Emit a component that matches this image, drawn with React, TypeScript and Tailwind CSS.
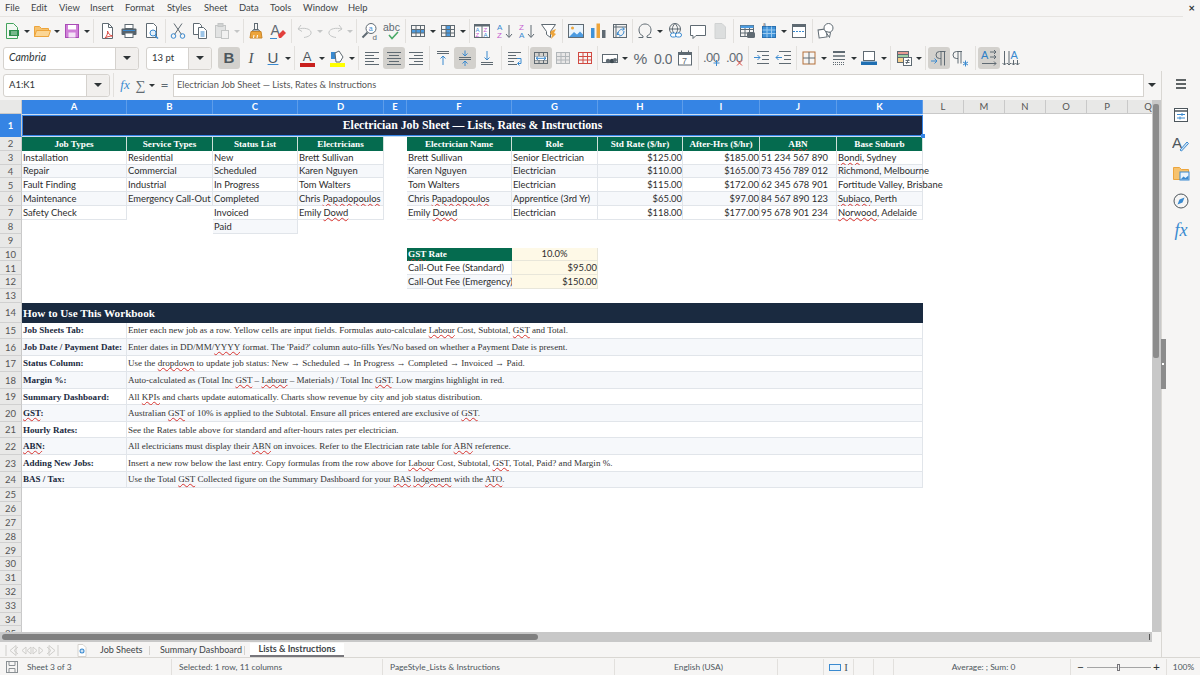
import type { ReactNode } from "react";

const BLUE = "#3a8ad0";
const GRAY = "#5f6a72";
const LITE = "#c4c6c6";
const ORANGE = "#eda53c";

function Ic({ children, size = 18 }: { children: ReactNode; size?: number }) {
  return (
    <svg width={size} height={size} viewBox="0 0 18 18" fill="none" strokeWidth="1">
      {children}
    </svg>
  );
}

function Lines({ ys, x1, x2, color = GRAY }: { ys: number[]; x1: number | number[]; x2: number | number[]; color?: string }) {
  return (
    <>
      {ys.map((y, i) => (
        <line
          key={y}
          x1={Array.isArray(x1) ? x1[i] : x1}
          x2={Array.isArray(x2) ? x2[i] : x2}
          y1={y}
          y2={y}
          stroke={color}
        />
      ))}
    </>
  );
}

// little table used by the row, column and merge buttons
function TableGlyph({ color = GRAY }: { color?: string }) {
  return (
    <g stroke={color}>
      <rect x="2.5" y="3.5" width="13" height="11" />
      <path d="M2.5 7.5h13M2.5 11h13M7 3.5v11M11.5 3.5v11" />
    </g>
  );
}

const icons: Record<string, ReactNode> = {
  newDoc: (
    <>
      <path d="M3.5 1.5h7l4 4v11h-11z" stroke="#43a35c" fill="#f2f8f2" />
      <rect x="6" y="8" width="10" height="6" fill="#2f8f4e" />
      <path d="M8 10h6M8 12h6" stroke="#bfe3c8" />
    </>
  ),
  open: (
    <>
      <path d="M1.5 4.5h5l2 2h7v8h-14z" fill="#f6c26e" stroke={ORANGE} />
      <path d="M1.5 14.5l2-6h14l-2 6z" fill="#fbd695" stroke={ORANGE} />
    </>
  ),
  save: (
    <>
      <rect x="2.5" y="2.5" width="13" height="13" fill="#d07fd8" stroke="#a94cb6" />
      <rect x="5" y="3" width="8" height="4.5" fill="#fff" />
      <rect x="5.5" y="10.5" width="7" height="5" fill="#f4e3f6" />
    </>
  ),
  pdf: (
    <>
      <path d="M4.5 1.5h6l4 4v11h-10z" stroke={GRAY} fill="#fff" />
      <path d="M10.5 1.5v4h4" stroke={GRAY} />
      <path d="M7 16c2-2 3-5 2.5-7 1 3 2.500 4.500 5 5-2 0-5 .5-7.500 2z" stroke="#d9463e" />
    </>
  ),
  print: (
    <>
      <rect x="5" y="2.500" width="8" height="4" fill="#fff" stroke={GRAY} />
      <rect x="1.500" y="6.500" width="15" height="6.500" rx="1" fill="#56626b" />
      <rect x="5" y="11" width="8" height="4.500" fill="#fff" stroke={GRAY} />
      <rect x="3" y="8" width="12" height="1" fill={BLUE} />
    </>
  ),
  preview: (
    <>
      <path d="M3.500 1.500h7l3 3v11h-10z" stroke={GRAY} fill="#fff" />
      <circle cx="10" cy="11" r="3" stroke={BLUE} fill="#e4f0fa" />
      <path d="M12 13.500l3 3" stroke={BLUE} strokeWidth="1.500" />
    </>
  ),
  cut: (
    <>
      <path d="M5 1.500l7.500 11M13 1.500l-7.500 11" stroke={GRAY} />
      <circle cx="4.500" cy="14" r="2.300" stroke={BLUE} />
      <circle cx="13.500" cy="14" r="2.300" stroke={BLUE} />
    </>
  ),
  copy: (
    <>
      <path d="M2.500 1.500h6l2 2v9h-8z" stroke={GRAY} fill="#fff" />
      <path d="M7.500 5.500h5l3 3v8h-8z" stroke={GRAY} fill="#fff" />
      <Lines ys={[10, 12, 14]} x1={9.500} x2={13.500} color={BLUE} />
    </>
  ),
  paste: (
    <>
      <rect x="2.500" y="3.500" width="10" height="12" fill="#e2e3e3" stroke={LITE} />
      <rect x="5" y="1.500" width="5" height="3" fill="#d0d2d2" stroke={LITE} />
      <rect x="8.500" y="8.500" width="7" height="8" fill="#f1f1f1" stroke={LITE} />
    </>
  ),
  clone: (
    <>
      <rect x="7.500" y="1.500" width="3" height="6" stroke={GRAY} />
      <path d="M5.500 9l1-1.500h5l1 1.500z" fill="#fff" stroke={GRAY} />
      <path d="M4 9.500h10l1 6.500H3z" fill={ORANGE} stroke="#c9862a" />
      <path d="M6.500 16l.5-3M10 16l.5-3" stroke="#fff" />
    </>
  ),
  clear: (
    <>
      <text x="1.500" y="13" fontFamily="'Liberation Sans',sans-serif" fontSize="14" fill={GRAY}>A</text>
      <path d="M1 16.500h7" stroke={BLUE} />
      <path d="M9 13l5-5 3 3-5 5h-2z" fill="#e2403c" />
    </>
  ),
  undo: <path d="M5 3L2 7l4 2.500M2.500 7C8 5.500 14 6.500 15 10c.8 3-3 5-7 5.500" stroke={LITE} />,
  redo: <path d="M13 3l3 4-4 2.500M15.500 7C10 5.500 4 6.500 3 10c-.8 3 3 5 7 5.500" stroke={LITE} />,
  find: (
    <>
      <circle cx="10" cy="6.500" r="5" stroke={GRAY} fill="#fff" />
      <path d="M6.500 10.500L1.500 15.500" stroke={GRAY} strokeWidth="2" />
      <text x="7.800" y="9" fontSize="7" fontFamily="'Liberation Sans',sans-serif" fill={BLUE}>a</text>
      <text x="11.500" y="17.500" fontSize="8" fontFamily="'Liberation Sans',sans-serif" fill={GRAY}>d</text>
    </>
  ),
  spell: (
    <>
      <text x="0" y="9" fontSize="10.500" fontFamily="'Liberation Sans',sans-serif" fill={GRAY}>abc</text>
      <path d="M6 13l3 3.500 6-6.500" stroke="#47a865" strokeWidth="1.500" />
    </>
  ),
  rows: (
    <>
      <rect x="2" y="7" width="14" height="4" fill="#4c9be0" />
      <TableGlyph color={GRAY} />
    </>
  ),
  cols: (
    <>
      <rect x="7" y="3.500" width="4.500" height="11" fill="#4c9be0" />
      <TableGlyph color={GRAY} />
    </>
  ),
  sortBox: (
    <>
      <rect x="1.500" y="2.500" width="15" height="13" fill="#fff" stroke={GRAY} />
      <rect x="1.500" y="2.500" width="15" height="2" fill={GRAY} />
      <path d="M9 2.500v13" stroke={GRAY} />
      <text x="2.500" y="10" fontSize="6" fontFamily="'Liberation Sans',sans-serif" fill={BLUE}>A</text>
      <text x="2.500" y="15" fontSize="6" fontFamily="'Liberation Sans',sans-serif" fill="#c55fd0">Z</text>
      <text x="10.500" y="10" fontSize="6" fontFamily="'Liberation Sans',sans-serif" fill="#c55fd0">Z</text>
      <text x="10.500" y="15" fontSize="6" fontFamily="'Liberation Sans',sans-serif" fill={BLUE}>A</text>
    </>
  ),
  sortAsc: (
    <>
      <text x="1" y="8" fontSize="8" fontFamily="'Liberation Sans',sans-serif" fill={BLUE}>A</text>
      <text x="1" y="16" fontSize="8" fontFamily="'Liberation Sans',sans-serif" fill="#c55fd0">Z</text>
      <path d="M13 3v12M10 12l3 3.500 3-3.500" stroke={GRAY} />
    </>
  ),
  sortDesc: (
    <>
      <text x="1" y="8" fontSize="8" fontFamily="'Liberation Sans',sans-serif" fill="#c55fd0">Z</text>
      <text x="1" y="16" fontSize="8" fontFamily="'Liberation Sans',sans-serif" fill={BLUE}>A</text>
      <path d="M13 3v12M10 12l3 3.500 3-3.500" stroke={GRAY} />
    </>
  ),
  filter: (
    <>
      <path d="M1.500 2.500h14l-5 7v6l-4-3v-3z" stroke={GRAY} fill="#fff" />
      <path d="M11 9l5-2-2 4 2 1-5 5 1-4-2-1z" fill={ORANGE} />
    </>
  ),
  image: (
    <>
      <rect x="1.500" y="2.500" width="15" height="13" stroke={GRAY} fill="#eaf4fc" />
      <circle cx="5.500" cy="6" r="1.500" fill={ORANGE} />
      <path d="M2 15l5-5 3 2.500 3-3 3 3V15z" fill="#4c9be0" />
    </>
  ),
  chart: (
    <>
      <rect x="2" y="6" width="3.500" height="10" fill="#3f92d8" />
      <rect x="7.500" y="1.500" width="3.500" height="14.500" fill={ORANGE} />
      <rect x="13" y="8" width="3.500" height="8" fill={GRAY} />
    </>
  ),
  pivot: (
    <>
      <rect x="2.500" y="2.500" width="13" height="13" stroke={GRAY} fill="#f2f2f2" />
      <path d="M2.500 5h13M5 2.500v13" stroke={GRAY} />
      <path d="M7 12c0-3 2-5 6-5M11.500 5.500L13.500 7l-2 1.500M7 10l-1 2.500h2.500M13 9c0 3-2 5-5 5" stroke={BLUE} />
    </>
  ),
  omega: (
    <path d="M2.500 15.500h4.500v-1.500c-2.500-1-4-3.200-4-6 0-3.500 2.500-6 6-6s6 2.500 6 6c0 2.800-1.500 5-4 6v1.500h4.500" stroke={GRAY} />
  ),
  link: (
    <>
      <circle cx="8" cy="7" r="5.500" stroke={GRAY} />
      <path d="M2.500 7h11M8 1.500c-3.500 3.500-3.500 7.500 0 11M8 1.500c3.500 3.500 3.500 7.500 0 11" stroke={GRAY} />
      <rect x="3.500" y="11" width="6" height="4" rx="2" stroke={BLUE} fill="#fff" />
      <rect x="8.500" y="11" width="6" height="4" rx="2" stroke={BLUE} fill="#fff" />
    </>
  ),
  comment: <path d="M1.500 3.500h15v10H7l-3 3v-3H1.500z" stroke={GRAY} fill="#fff" />,
  headerDoc: <path d="M4 1.500h7l3.500 3.500v11.500H4z" fill="#dcdede" stroke="#d0d2d2" />,
  freeze: (
    <>
      <TableGlyph color={GRAY} />
      <rect x="2.500" y="3.500" width="13" height="2.500" fill="#4c9be0" />
      <rect x="9" y="10" width="8" height="6" rx="1.500" fill={GRAY} />
    </>
  ),
  splitGrid: (
    <>
      <rect x="2.500" y="4.500" width="13" height="11" fill="#3f92d8" stroke="#2a70b0" />
      <path d="M2.500 8h13M2.500 11.500h13M7 4.500v11M11.500 4.500v11" stroke="#9ccbf0" />
      <text x="3" y="4" fontSize="5" fontFamily="'Liberation Sans',sans-serif" fill={GRAY}>a</text>
    </>
  ),
  headerRow: (
    <>
      <rect x="2.500" y="2.500" width="13" height="13" stroke={GRAY} fill="#fff" />
      <rect x="2.500" y="2.500" width="13" height="2.500" fill={GRAY} />
      <path d="M3 9.500h12" stroke={BLUE} strokeDasharray="2 1" />
    </>
  ),
  shapes: (
    <>
      <rect x="1.500" y="7.500" width="8" height="8" transform="rotate(-8 5 11)" stroke={GRAY} fill="#fff" />
      <circle cx="11.500" cy="6" r="4.500" stroke={GRAY} fill="#fff" />
      <path d="M8.500 9.500l5 1-1 5z" stroke={GRAY} fill="#fff" />
    </>
  ),
  alignL: <Lines ys={[3.500, 6.500, 9.500, 12.500, 15.500]} x1={2} x2={[16, 11, 16, 11, 16]} />,
  alignC: <Lines ys={[3.500, 6.500, 9.500, 12.500, 15.500]} x1={[2, 4, 2, 4, 2]} x2={[16, 14, 16, 14, 16]} />,
  alignR: <Lines ys={[3.500, 6.500, 9.500, 12.500, 15.500]} x1={[2, 7, 2, 7, 2]} x2={16} />,
  vTop: (
    <>
      <Lines ys={[2.500, 4.500]} x1={[3, 3]} x2={[15, 15]} />
      <path d="M9 16V7M6.500 9.500L9 7l2.500 2.500" stroke={BLUE} />
    </>
  ),
  vMid: (
    <>
      <Lines ys={[8.500, 10.500]} x1={[3, 3]} x2={[15, 15]} />
      <path d="M9 1.500V7M6.500 4.500L9 7l2.500-2.500M9 17v-5M6.500 14.500L9 12l2.500 2.500" stroke={BLUE} />
    </>
  ),
  vBot: (
    <>
      <Lines ys={[13.500, 15.500]} x1={[3, 3]} x2={[15, 15]} />
      <path d="M9 2v9M6.500 8.500L9 11l2.500-2.500" stroke={BLUE} />
    </>
  ),
  wrap: (
    <>
      <Lines ys={[3.500, 6.500, 9.500, 12.500, 15.500]} x1={2} x2={[15, 10, 12, 8, 11]} />
      <path d="M11 9.500h4v5h-3M13.500 12.500L11.500 14.500l2 2" stroke={BLUE} />
    </>
  ),
  merge: (
    <>
      <TableGlyph color={GRAY} />
      <rect x="3" y="7.500" width="12" height="3.500" fill="#fff" />
      <path d="M4 9.300h10M6 7.800L4 9.300l2 1.500M12 7.800l2 1.500-2 1.500" stroke={BLUE} />
    </>
  ),
  mergeOff: (
    <g opacity=".45">
      <rect x="2.500" y="3.500" width="13" height="11" fill="#d8d8d8" />
      <TableGlyph color={GRAY} />
    </g>
  ),
  unmerge: (
    <g>
      <rect x="2.500" y="3.500" width="13" height="11" stroke="#d14a42" />
      <path d="M2.500 7.500h13M2.500 11h13M7 3.500v11M11.500 3.500v11" stroke="#d14a42" />
    </g>
  ),
  currency: (
    <>
      <rect x="1.500" y="5.500" width="15" height="8" stroke={GRAY} fill="#fff" />
      <circle cx="7" cy="12" r="2.200" fill={GRAY} />
      <circle cx="11" cy="12" r="2.200" fill="#3e4a52" />
      <circle cx="14" cy="11" r="2" fill={GRAY} />
    </>
  ),
  percent: (
    <text x="1.500" y="15" fontSize="15.500" fontFamily="'Liberation Sans',sans-serif" fill={GRAY}>%</text>
  ),
  number: (
    <text x="0" y="14.500" fontSize="14" fontFamily="'Liberation Sans',sans-serif" fill={GRAY} letterSpacing="-.5">0.0</text>
  ),
  date: (
    <>
      <rect x="2.500" y="3.500" width="13" height="12.500" stroke={GRAY} fill="#fff" />
      <rect x="2.500" y="3.500" width="13" height="2.500" fill={GRAY} />
      <path d="M5.500 1.500v3M12.500 1.500v3" stroke={GRAY} />
      <text x="6" y="14.500" fontSize="9" fontFamily="'Liberation Sans',sans-serif" fill={GRAY}>7</text>
    </>
  ),
  decAdd: (
    <>
      <text x="0" y="13" fontSize="13" fontFamily="'Liberation Sans',sans-serif" fill={GRAY} letterSpacing="-.5">.00</text>
      <path d="M13.500 11v6M10.500 14h6" stroke={BLUE} />
    </>
  ),
  decDel: (
    <>
      <text x="0" y="13" fontSize="13" fontFamily="'Liberation Sans',sans-serif" fill={GRAY} letterSpacing="-.5">.00</text>
      <path d="M11 11.500l5 5M16 11.500l-5 5" stroke="#d9463e" />
    </>
  ),
  indentIn: (
    <>
      <Lines ys={[2.500, 6.500, 10.500, 14.500]} x1={[4, 9, 9, 4]} x2={16} />
      <path d="M1 8.500h6M4.500 6L7 8.500 4.500 11" stroke={BLUE} />
    </>
  ),
  indentOut: (
    <>
      <Lines ys={[2.500, 6.500, 10.500, 14.500]} x1={[4, 9, 9, 4]} x2={16} />
      <path d="M7 8.500H1M3.500 6L1 8.500 3.500 11" stroke={BLUE} />
    </>
  ),
  borders: (
    <>
      <rect x="3" y="3" width="12" height="12" stroke="#b3703a" />
      <path d="M9 3v12M3 9h12" stroke={GRAY} />
    </>
  ),
  borderStyle: (
    <>
      <rect x="3" y="2" width="12" height="2" fill={GRAY} />
      <path d="M3 7h12" stroke={GRAY} strokeWidth="1.500" />
      <path d="M3 10.500h12" stroke={GRAY} />
      <path d="M3 13.500h12M3 15.500h12" stroke={GRAY} strokeDasharray="1 1" />
    </>
  ),
  borderColor: (
    <>
      <rect x="3.500" y="2.500" width="11" height="9" stroke={GRAY} fill="#fff" />
      <rect x="1" y="12.500" width="16" height="3.500" fill="#1f6fb2" />
    </>
  ),
  cond: (
    <>
      <rect x="2.500" y="2.500" width="11" height="3" fill="#e69a92" stroke={GRAY} />
      <rect x="2.500" y="5.500" width="11" height="3" fill="#9bd0a5" stroke={GRAY} />
      <rect x="2.500" y="8.500" width="6" height="5" fill="#f5d08e" stroke={GRAY} />
      <rect x="8.500" y="8.500" width="8" height="8" fill="#fff" stroke={GRAY} />
      <path d="M10.500 11.500h4M10.500 13.500h4M13.500 10l-2 5" stroke={GRAY} />
    </>
  ),
  ltr: (
    <>
      <path d="M14.500 2.500v14M11 2.500v14M15.500 2.500H9.500a3.500 3.500 0 0 0 0 7H11" stroke={GRAY} />
      <path d="M1 12h6M4.500 9.500L7 12l-2.500 2.500" stroke={BLUE} />
    </>
  ),
  rtl: (
    <>
      <path d="M9 2.500v12M6 2.500v12M10 2.500H4.500a3.500 3.500 0 0 0 0 7H6" stroke={GRAY} />
      <path d="M11 13l5 3M16 13l-5 3M13.500 11.500v6" stroke={BLUE} />
    </>
  ),
  textH: (
    <>
      <text x="1" y="10" fontSize="11" fontFamily="'Liberation Sans',sans-serif" fill="#2f7fc7">A</text>
      <path d="M10 3h6M14 1l2 2-2 2M10 8h6M14 6l2 2-2 2M2 14.500h14M14 12.500l2 2-2 2" stroke={GRAY} />
    </>
  ),
  textV: (
    <>
      <text x="8.500" y="10" fontSize="11" fontFamily="'Liberation Sans',sans-serif" fill={BLUE}>A</text>
      <path d="M2.500 2v14M.5 14l2 2 2-2M7 2v14M5 14l2 2 2-2M11.500 11v5M9.500 14l2 2 2-2M15.500 11v5M13.500 14l2 2 2-2" stroke={GRAY} />
    </>
  ),
};

function Tool({ name, on }: { name: string; on?: boolean }) {
  return (
    <div className={`w-[22px] h-[22px] shrink-0 flex items-center justify-center rounded-[3px] ${on ? "bg-[#d3d1cd]" : ""}`}>
      <Ic>{icons[name]}</Ic>
    </div>
  );
}

function Arrow({ off }: { off?: boolean }) {
  return (
    <div className="w-[8px] h-[22px] shrink-0 flex items-center justify-center">
      <div className={`w-0 h-0 border-x-[3px] border-x-transparent border-t-[3px] ${off ? "border-t-[#c4c6c6]" : "border-t-[#2e3436]"}`} />
    </div>
  );
}

function Sep({ w }: { w: string }) {
  return (
    <div className={`${w} h-[24px] shrink-0 flex justify-center`}>
      <div className="w-px h-full bg-[#e2e0dd]" />
    </div>
  );
}

function LetterBtn({ children, className, on }: { children: ReactNode; className?: string; on?: boolean }) {
  return (
    <div className={`w-[22px] h-[22px] shrink-0 flex items-center justify-center rounded-[3px] text-[15px] text-[#4d565c] ${on ? "bg-[#d3d1cd]" : ""} ${className ?? ""}`}>
      {children}
    </div>
  );
}

function Combo({ text, box, drop, italic }: { text: string; box: string; drop: string; italic?: boolean }) {
  return (
    <div className={`${box} h-[23px] shrink-0 flex bg-white border border-[#d5d2ce] rounded-[3px] text-[#2e3436]`}>
      <div className={`flex-1 flex items-center pl-[5px] ${italic ? "italic text-[10.5px]" : "text-[9.5px]"}`}>{text}</div>
      <div className={`${drop} flex items-center justify-center bg-[#f1efed] border-l border-[#d5d2ce] rounded-r-[3px]`}>
        <div className="w-0 h-0 border-x-[4px] border-x-transparent border-t-[4px] border-t-[#2e3436]" />
      </div>
    </div>
  );
}

const MENUS = [
  ["File", "w-[26px]"],
  ["Edit", "w-[28px]"],
  ["View", "w-[31px]"],
  ["Insert", "w-[35px]"],
  ["Format", "w-[42px]"],
  ["Styles", "w-[37px]"],
  ["Sheet", "w-[35px]"],
  ["Data", "w-[31px]"],
  ["Tools", "w-[33px]"],
  ["Window", "w-[45px]"],
  ["Help", "w-[30px]"],
];

function MenuBar() {
  return (
    <div className="h-[17px] flex items-center pl-[5px] pr-[6px] pt-px text-[9.4px] text-[#3d4447] border-b border-[#e6e4e1] mr-[17px] relative">
      {MENUS.map(([label, w]) => (
        <div key={label} className={`${w} shrink-0`}>{label}</div>
      ))}
      <span className="absolute right-[-12px] top-[2px] text-[11px] leading-none text-[#2e3436] font-bold">×</span>
    </div>
  );
}

function ToolbarTop() {
  return (
    <div className="h-[28px] flex items-center pl-[1px]">
      <Tool name="newDoc" /><Arrow />
      <Tool name="open" /><Arrow />
      <Tool name="save" /><Arrow />
      <Sep w="w-[5px]" />
      <Tool name="pdf" /><Tool name="print" /><div className="w-px" /><Tool name="preview" />
      <Sep w="w-[4px]" />
      <Tool name="cut" /><Tool name="copy" /><Tool name="paste" /><Arrow off />
      <Sep w="w-[4px]" />
      <Tool name="clone" /><Tool name="clear" />
      <Sep w="w-[5px]" />
      <Tool name="undo" /><Arrow off /><Tool name="redo" /><Arrow off />
      <Sep w="w-[5px]" />
      <Tool name="find" /><Tool name="spell" />
      <Sep w="w-[4px]" />
      <Tool name="rows" /><Arrow /><Tool name="cols" /><Arrow />
      <Sep w="w-[4px]" />
      <Tool name="sortBox" /><div className="w-px" /><Tool name="sortAsc" /><Tool name="sortDesc" /><Tool name="filter" />
      <Sep w="w-[5px]" />
      <Tool name="image" /><Tool name="chart" /><Tool name="pivot" />
      <Sep w="w-[3px]" />
      <Tool name="omega" /><Arrow /><div className="w-px" /><Tool name="link" /><Tool name="comment" /><Tool name="headerDoc" />
      <Sep w="w-[5px]" />
      <Tool name="freeze" /><Tool name="splitGrid" /><Arrow /><Tool name="headerRow" />
      <Sep w="w-[5px]" />
      <Tool name="shapes" />
    </div>
  );
}

function ToolbarFormat() {
  return (
    <div className="h-[26px] flex items-center pl-[3px]">
      <Combo text="Cambria" box="w-[136px]" drop="w-[23px]" italic />
      <div className="w-[7px]" />
      <Combo text="13 pt" box="w-[66px]" drop="w-[23px]" />
      <div className="w-[6px]" />
      <LetterBtn on className="font-['Liberation_Sans',sans-serif] font-bold">B</LetterBtn>
      <LetterBtn className="font-['Liberation_Serif',serif] italic">I</LetterBtn>
      <LetterBtn className="font-['Liberation_Sans',sans-serif] underline decoration-[#3a8ad0]">U</LetterBtn>
      <Arrow />
      <Sep w="w-[4px]" />
      <div className="w-[22px] h-[22px] shrink-0 flex flex-col items-center justify-center">
        <span className="text-[13px] leading-[13px] text-[#4d565c] font-['Liberation_Sans',sans-serif]">A</span>
        <div className="w-[15px] h-[4px] bg-[#c9211e]" />
      </div>
      <Arrow />
      <div className="w-[22px] h-[22px] shrink-0 flex flex-col items-center justify-center">
        <svg width="14" height="13" viewBox="0 0 14 13" fill="none">
          <path d="M1 2h6v7H1z" fill="#3a8ad0" />
          <path d="M5 3l4-2 4 6-3 5H6z" fill="#fff" stroke="#5f6a72" />
        </svg>
        <div className="w-[15px] h-[4px] bg-[#ffff00]" />
      </div>
      <Arrow />
      <Sep w="w-[5px]" />
      <Tool name="alignL" /><Tool name="alignC" on /><Tool name="alignR" />
      <Sep w="w-[5px]" />
      <Tool name="vTop" /><Tool name="vMid" on /><Tool name="vBot" />
      <Sep w="w-[6px]" />
      <Tool name="wrap" />
      <Sep w="w-[4px]" />
      <Tool name="merge" on /><Tool name="mergeOff" /><Tool name="unmerge" />
      <Sep w="w-[3px]" />
      <Tool name="currency" /><Arrow /><div className="w-px" />
      <Tool name="percent" /><Tool name="number" /><Tool name="date" />
      <Sep w="w-[5px]" />
      <Tool name="decAdd" /><div className="w-px" /><Tool name="decDel" />
      <Sep w="w-[5px]" />
      <Tool name="indentIn" /><Tool name="indentOut" />
      <Sep w="w-[3px]" />
      <Tool name="borders" /><Arrow /><Tool name="borderStyle" /><Arrow /><Tool name="borderColor" /><Arrow />
      <Sep w="w-[5px]" />
      <Tool name="cond" /><Arrow />
      <Sep w="w-[5px]" />
      <Tool name="ltr" on /><Tool name="rtl" />
      <Sep w="w-[6px]" />
      <Tool name="textH" on /><Tool name="textV" />
    </div>
  );
}

function FormulaBar() {
  return (
    <div className="h-[28px] flex items-center pl-[3px] pr-[2px] text-[#2e3436]">
      <Combo text="A1:K1" box="w-[107px]" drop="w-[23px]" />
      <Sep w="w-[7px]" />
      <div className="w-[16px] text-center text-[13px] italic text-[#3a8ad0] font-['Liberation_Serif',serif]">fx</div>
      <div className="w-[15px] text-center text-[14px] text-[#5f6a72] font-['Liberation_Serif',serif]">∑</div>
      <Arrow />
      <div className="w-[17px] text-center text-[14px] leading-none text-[#5f6a72]">=</div>
      <div className="flex-1 h-[23px] flex items-center pl-[3px] bg-white border border-[#d5d2ce] text-[9.2px] text-[#555]">
        Electrician Job Sheet — Lists, Rates &amp; Instructions
      </div>
      <div className="w-[15px] flex justify-center">
        <div className="w-0 h-0 border-x-[4px] border-x-transparent border-t-[4px] border-t-[#2e3436]" />
      </div>
    </div>
  );
}

const GRID = "grid grid-cols-[22px_105px_86px_85px_86px_23px_105px_86px_85px_77px_77px_86px_41px_41px_41px_41px_41px_41px]";

function S({ children }: { children: ReactNode }) {
  return <span className="underline decoration-wavy decoration-[#d8342f] decoration-[0.7px] underline-offset-[0.5px]">{children}</span>;
}

function Row({ n, h, sel, children }: { n: number; h: string; sel?: boolean; children?: ReactNode }) {
  return (
    <div className={`${GRID} ${h}`}>
      <div className={`flex items-center justify-center pt-px border-b text-[9.5px] ${sel ? "bg-[#3584e4] text-white font-bold border-[#3584e4]" : "bg-[#e8e8e7] text-[#555] border-[#d0d0d0]"} border-r border-r-[#c9c9c9]`}>
        {n}
      </div>
      {children}
    </div>
  );
}

function Head({ children, span }: { children: ReactNode; span?: string }) {
  return (
    <div className={`${span ?? ""} bg-[#056b4f] text-white font-bold text-[9.2px] pt-px flex items-center justify-center border-r border-[#cfe0d9] whitespace-nowrap font-['Liberation_Serif',serif]`}>
      <span>{children}</span>
    </div>
  );
}

function Cell({ children, alt, right }: { children?: ReactNode; alt?: boolean; right?: boolean }) {
  return (
    <div className={`flex items-center whitespace-nowrap border-b border-r border-[#e1e5ea] text-[9.4px] text-[#2d2d2d] ${alt ? "bg-[#f6f8fb]" : "bg-white"} ${right ? "justify-end" : "pl-px"}`}>
      <span>{children}</span>
    </div>
  );
}

const LISTS: ReactNode[][] = [
  ["Installation", "Residential", "New", "Brett Sullivan", "Brett Sullivan", "Senior Electrician", "$125.00", "$185.00", "51 234 567 890", <><S>Bondi</S>, Sydney</>],
  ["Repair", "Commercial", "Scheduled", "Karen Nguyen", "Karen Nguyen", "Electrician", "$110.00", "$165.00", "73 456 789 012", "Richmond, Melbourne"],
  ["Fault Finding", "Industrial", "In Progress", "Tom Walters", "Tom Walters", "Electrician", "$115.00", "$172.00", "62 345 678 901", "Fortitude Valley, Brisbane"],
  ["Maintenance", "Emergency Call-Out", "Completed", <>Chris <S>Papadopoulos</S></>, <>Chris <S>Papadopoulos</S></>, "Apprentice (3rd Yr)", "$65.00", "$97.00", "84 567 890 123", <><S>Subiaco</S>, Perth</>],
  ["Safety Check", null, "Invoiced", <>Emily <S>Dowd</S></>, <>Emily <S>Dowd</S></>, "Electrician", "$118.00", "$177.00", "95 678 901 234", <><S>Norwood</S>, Adelaide</>],
];

const HOWTO: [ReactNode, ReactNode][] = [
  ["Job Sheets Tab:", <>Enter each new job as a row. Yellow cells are input fields. Formulas auto-calculate <S>Labour</S> Cost, Subtotal, <S>GST</S> and Total.</>],
  ["Job Date / Payment Date:", <>Enter dates in DD/MM/<S>YYYY</S> format. The 'Paid?' column auto-fills Yes/No based on whether a Payment Date is present.</>],
  ["Status Column:", <>Use the <S>dropdown</S> to update job status: New → Scheduled → In Progress → Completed → Invoiced → Paid.</>],
  ["Margin %:", <>Auto-calculated as (Total Inc <S>GST</S> – <S>Labour</S> – Materials) / Total Inc <S>GST</S>. Low margins highlight in red.</>],
  ["Summary Dashboard:", <>All <S>KPIs</S> and charts update automatically. Charts show revenue by city and job status distribution.</>],
  [<><S>GST</S>:</>, <>Australian <S>GST</S> of 10% is applied to the Subtotal. Ensure all prices entered are exclusive of <S>GST</S>.</>],
  ["Hourly Rates:", "See the Rates table above for standard and after-hours rates per electrician."],
  [<><S>ABN</S>:</>, <>All electricians must display their <S>ABN</S> on invoices. Refer to the Electrician rate table for <S>ABN</S> reference.</>],
  ["Adding New Jobs:", <>Insert a new row below the last entry. Copy formulas from the row above for <S>Labour</S> Cost, Subtotal, <S>GST</S>, Total, Paid? and Margin %.</>],
  ["BAS / Tax:", <>Use the Total <S>GST</S> Collected figure on the Summary Dashboard for your <S>BAS</S> <S>lodgement</S> with the <S>ATO</S>.</>],
];

const COL_LABELS = ["A", "B", "C", "D", "E", "F", "G", "H", "I", "J", "K", "L", "M", "N", "O", "P", "Q"];

function Sheet() {
  return (
    <div className="flex-1 min-w-0 overflow-hidden bg-white font-['Lato',sans-serif] leading-none">
      <div className="w-[1169px]">
        <div className={`${GRID} h-[14px] text-[9.5px]`}>
          <div className="bg-[#e8e8e7] border-r border-b border-[#c9c9c9]" />
          {COL_LABELS.map((c, i) => (
            <div
              key={c}
              className={`flex items-center justify-center border-r ${i < 11 ? "bg-[#3584e4] border-[#5d9dea] text-white font-bold" : "bg-[#e8e8e7] border-[#c9c9c9] border-b text-[#555]"}`}
            >
              {c}
            </div>
          ))}
        </div>

        <Row n={1} h="h-[23px]" sel>
          <div className="col-span-11 relative bg-[#1a2540] border-y border-y-[#c9ddf5] pt-px flex items-center justify-center text-white font-bold text-[11.8px] font-['Liberation_Serif',serif]">
            Electrician Job Sheet — Lists, Rates &amp; Instructions
            <div className="absolute inset-0 border border-[#3584e4]" />
            <div className="absolute right-[-2px] bottom-[-2px] w-[4px] h-[4px] bg-[#3584e4]" />
          </div>
        </Row>

        <Row n={2} h="h-[13.83px]">
          <Head>Job Types</Head>
          <Head>Service Types</Head>
          <Head>Status List</Head>
          <Head>Electricians</Head>
          <div />
          <Head>Electrician Name</Head>
          <Head>Role</Head>
          <Head>Std Rate ($/hr)</Head>
          <Head>After-Hrs ($/hr)</Head>
          <Head><S>ABN</S></Head>
          <Head>Base Suburb</Head>
        </Row>

        {LISTS.map((r, i) => (
          <Row key={i} n={i + 3} h="h-[13.83px]">
            <Cell alt={i % 2 === 1}>{r[0]}</Cell>
            {r[1] ? <Cell alt={i % 2 === 1}>{r[1]}</Cell> : <div />}
            <Cell alt={i % 2 === 1}>{r[2]}</Cell>
            <Cell alt={i % 2 === 1}>{r[3]}</Cell>
            <div />
            <Cell alt={i % 2 === 1}>{r[4]}</Cell>
            <Cell alt={i % 2 === 1}>{r[5]}</Cell>
            <Cell alt={i % 2 === 1} right>{r[6]}</Cell>
            <Cell alt={i % 2 === 1} right>{r[7]}</Cell>
            <Cell alt={i % 2 === 1}>{r[8]}</Cell>
            <Cell alt={i % 2 === 1}>{r[9]}</Cell>
          </Row>
        ))}

        <Row n={8} h="h-[13.83px]">
          <div />
          <div />
          <Cell alt>Paid</Cell>
        </Row>
        <Row n={9} h="h-[13.83px]" />
        <Row n={10} h="h-[13.83px]">
          <div className="col-start-7 bg-[#056b4f] text-white font-bold text-[9.2px] pt-px flex items-center px-px font-['Liberation_Serif',serif]">
            <span><S>GST</S> Rate</span>
          </div>
          <div className="bg-[#fef9e7] border-b border-r border-[#e8e6da] flex items-center justify-center text-[9.4px] text-[#2d2d2d]">10.0%</div>
        </Row>
        <Row n={11} h="h-[13.83px]">
          <div className="col-start-7 grid"><Cell>Call-Out Fee (Standard)</Cell></div>
          <div className="bg-[#fef9e7] border-b border-r border-[#e8e6da] flex items-center justify-end text-[9.4px] text-[#2d2d2d]">$95.00</div>
        </Row>
        <Row n={12} h="h-[13.83px]">
          <div className="col-start-7 grid"><Cell alt>Call-Out Fee (Emergency)</Cell></div>
          <div className="bg-[#fef9e7] border-b border-r border-[#e8e6da] flex items-center justify-end text-[9.4px] text-[#2d2d2d]">$150.00</div>
        </Row>
        <Row n={13} h="h-[13.83px]" />

        <Row n={14} h="h-[19.7px]">
          <div className="col-span-11 bg-[#1a2a40] flex items-center pl-px pt-px text-white font-bold text-[11.2px] font-['Liberation_Serif',serif]">
            How to Use This Workbook
          </div>
        </Row>

        {HOWTO.map(([k, v], i) => (
          <Row key={i} n={i + 15} h="h-[16.55px]">
            <div className={`flex items-center pl-px pt-px border-b border-r border-[#e1e5ea] whitespace-nowrap font-bold text-[9.05px] text-[#1a2a40] font-['Liberation_Serif',serif] ${i % 2 ? "bg-[#f6f8fb]" : "bg-white"}`}>
              <span>{k}</span>
            </div>
            <div className={`col-span-10 flex items-center pl-px pt-px border-b border-r border-[#e1e5ea] whitespace-pre font-['Liberation_Serif',serif] text-[9.05px] text-[#333] ${i % 2 ? "bg-[#f6f8fb]" : "bg-white"}`}>
              <span>{v}</span>
            </div>
          </Row>
        ))}

        {Array.from({ length: 11 }, (_, i) => (
          <Row key={i} n={i + 25} h="h-[13.83px]" />
        ))}
      </div>
    </div>
  );
}

function VScroll() {
  return (
    <div className="w-[9px] shrink-0 bg-[#c8c8c8] pt-[4px] pl-px">
      <div className="w-[6px] h-[254px] bg-[#8c8c8c] rounded-[2px]" />
    </div>
  );
}

function HScroll() {
  return (
    <div className="h-[10px] flex bg-[#f6f5f4]">
      <div className="flex-1 bg-[#c8c8c8] pl-[2px] pt-[2px] pr-[2px] flex justify-between">
        <div className="w-[536px] h-[6px] bg-[#7f7f7f] rounded-[3px]" />
        <div className="w-px h-[6px] bg-[#555]" />
      </div>
      <div className="w-[9px]" />
    </div>
  );
}

function NavGlyph() {
  return (
    <svg width="62" height="13" viewBox="0 0 62 13" fill="none" stroke="#cfcecb">
      <path d="M1 1v11M11 1.500L5 6.500l6 5zM13 3l-4 3.500 4 3.500" />
      <path d="M21 3l-4 3.500 4 3.500zM26 3l-4 3.500 4 3.500zM28 3l4 3.500-4 3.500zM34 3l4 3.500-4 3.500z" />
      <path d="M44 1.500l6 5-6 5zM42 3l4 3.500-4 3.500M53 1v11" />
    </svg>
  );
}

function TabSep() {
  return <div className="w-[11px] h-[9px] shrink-0 flex justify-center"><div className="w-px bg-[#d5d2ce]" /></div>;
}

function Tabs() {
  return (
    <div className="h-[15px] flex items-center text-[9px] text-[#3d4447] pl-[5px] pt-px">
      <NavGlyph />
      <div className="w-[10px]" />
      <svg width="10" height="13" viewBox="0 0 10 13" fill="none">
        <path d="M1 .5h5l3 3v9H1z" fill="#fff" stroke="#d5d2ce" />
        <circle cx="5" cy="7" r="2.500" fill="#3a8ad0" />
        <path d="M3.500 7h3M5 5.500v3" stroke="#fff" />
      </svg>
      <div className="w-[13px]" />
      <div className="w-[44px] whitespace-nowrap">Job Sheets</div>
      <TabSep />
      <div className="w-[84px] pl-[5px] whitespace-nowrap">Summary Dashboard</div>
      <TabSep />
      <div className="w-[94px] h-full flex items-center justify-center bg-white border-b-2 border-[#77767b] font-bold whitespace-nowrap">
        Lists &amp; Instructions
      </div>
    </div>
  );
}

function StatusSep({ w, children, center }: { w: string; children?: ReactNode; center?: boolean }) {
  return (
    <div className={`${w} h-full shrink-0 flex items-center border-r border-[#e2e0dd] whitespace-nowrap ${center ? "justify-center" : "pl-[7px]"}`}>
      {children}
    </div>
  );
}

function StatusBar() {
  return (
    <div className="h-[18px] flex items-center border-t border-[#d9d7d3] pt-px text-[8.4px] text-[#4d565c]">
      <div className="w-[172px] h-full shrink-0 flex items-center border-r border-[#e2e0dd] pl-[6px] gap-[4px]">
        <svg width="12" height="12" viewBox="0 0 12 12" fill="none" stroke="#8a9094">
          <rect x=".5" y=".5" width="11" height="11" />
          <path d="M3 .5v4h6v-4M3 11.500v-4h6v4" />
        </svg>
        <span className="ml-[5px]">Sheet 3 of 3</span>
      </div>
      <StatusSep w="w-[211px]">Selected: 1 row, 11 columns</StatusSep>
      <StatusSep w="w-[232px]">PageStyle_Lists &amp; Instructions</StatusSep>
      <StatusSep w="w-[163px]" center><span className="ml-[5px]">English (USA)</span></StatusSep>
      <StatusSep w="w-[46px]" />
      <StatusSep w="w-[30px]" center>
        <div className="flex items-center gap-[3px]">
          <div className="w-[12px] h-[7px] border border-[#3a8ad0] bg-[#eaf4fc]" />
          <span className="text-[11px] leading-none font-['Liberation_Serif',serif]">I</span>
        </div>
      </StatusSep>
      <StatusSep w="w-[20px]" />
      <StatusSep w="w-[20px]" />
      <StatusSep w="w-[177px]" center><span className="ml-[3px]">Average: ; Sum: 0</span></StatusSep>
      <div className="w-[96px] h-full shrink-0 flex items-center justify-between px-[6px] border-r border-[#e2e0dd] text-[#2e3436]">
        <span className="text-[12px] leading-none">−</span>
        <div className="relative w-[64px] h-px bg-[#a5a5a5]">
          <div className="absolute left-[30px] top-[-3px] w-[3px] h-[7px] border border-[#77767b] bg-[#f6f5f4]" />
        </div>
        <span className="text-[12px] leading-none">+</span>
      </div>
      <div className="flex-1 text-center">100%</div>
    </div>
  );
}

function Sidebar() {
  return (
    <div className="relative w-[39px] shrink-0 flex flex-col items-center border-l border-[#d9d7d3] pt-[4px]">
      <div className="absolute left-[-1px] top-[268px] w-[5px] h-[50px] bg-[#8c8c8c]">
        <div className="absolute left-px top-[24px] w-[2px] h-[2px] bg-white" />
      </div>
      <div className="h-[18px] flex items-center">
        <svg width="14" height="10" viewBox="0 0 14 10" stroke="#2e3436" strokeWidth="1.500"><path d="M2 1h10M2 5h10M2 9h10" /></svg>
      </div>
      <div className="h-[13px]" />
      <Ic>
        <rect x="2.500" y="2.500" width="13" height="13" stroke="#4d565c" fill="#fff" />
        <path d="M2.500 5h13" stroke="#4d565c" strokeWidth="1.500" />
        <path d="M5 8.500h8M5 12h8M10 7v3M8 10.500v3" stroke="#3a8ad0" />
      </Ic>
      <div className="h-[11px]" />
      <Ic>
        <text x="0" y="13" fontSize="15" fontFamily="'Liberation Sans',sans-serif" fill="#4d565c">A</text>
        <path d="M8 15l7-8 1.500 1.500-7 7.500z" stroke="#3a8ad0" fill="#cfe4f6" />
      </Ic>
      <div className="h-[11px]" />
      <Ic>
        <path d="M1.500 3.500h6l2 2h7v10h-15z" fill="#f6c26e" stroke="#eda53c" />
        <rect x="8" y="8" width="9" height="8" fill="#eaf4fc" stroke="#3a8ad0" />
        <path d="M8.500 15.500l3-3 2 1.500 3-2.500v4z" fill="#3a8ad0" />
      </Ic>
      <div className="h-[10px]" />
      <Ic>
        <circle cx="9" cy="9" r="7" stroke="#4d565c" />
        <path d="M12.500 5.500l-2 5-5 2 2-5z" fill="#3a8ad0" />
      </Ic>
      <div className="h-[11px]" />
      <span className="h-[18px] text-[18px] leading-[18px] italic text-[#3a8ad0] font-['Liberation_Serif',serif]">fx</span>
    </div>
  );
}

export default function App() {
  return (
    <div className="w-[1200px] h-[675px] overflow-hidden flex flex-col bg-[#f6f5f4] font-['Lato',sans-serif]">
      <MenuBar />
      <ToolbarTop />
      <ToolbarFormat />
      <div className="flex-1 min-h-0 flex">
        <div className="flex-1 min-w-0 flex flex-col">
          <FormulaBar />
          <div className="h-px" />
          <div className="h-[532px] flex">
            <Sheet />
            <VScroll />
          </div>
          <HScroll />
          <Tabs />
        </div>
        <Sidebar />
      </div>
      <StatusBar />
    </div>
  );
}
